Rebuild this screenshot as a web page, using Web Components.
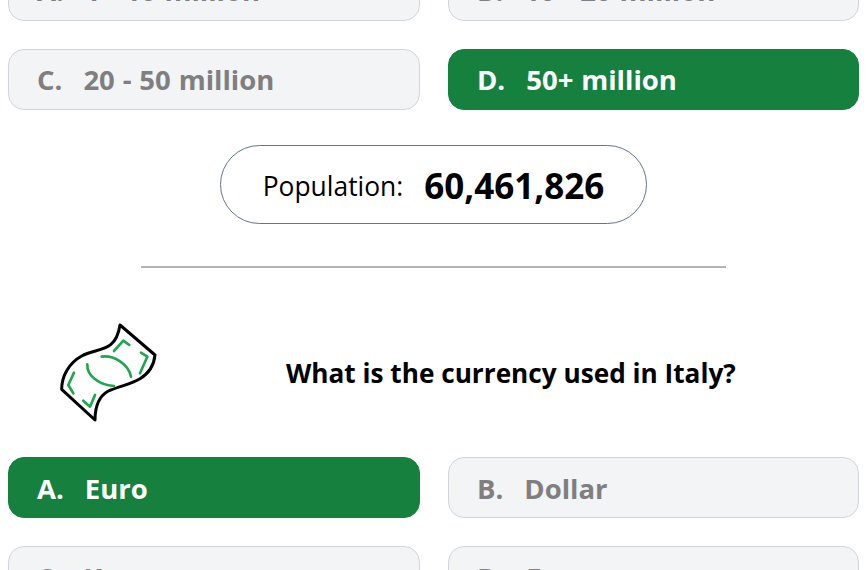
<!DOCTYPE html>
<html><head><meta charset="utf-8">
<style>
html,body{margin:0;padding:0;height:570px;overflow:hidden;background:#fff;}
body{font-family:"Open Sans","Noto Sans",sans-serif;color:#000;}
</style></head><body>
<quiz-page>
  <option-grid style="--text-nudge:0px">
    <quiz-option letter="A.">1 - 10 million</quiz-option>
    <quiz-option letter="B.">10 - 20 million</quiz-option>
    <quiz-option letter="C.">20 - 50 million</quiz-option>
    <quiz-option letter="D." selected>50+ million</quiz-option>
  </option-grid>
  <stat-pill label="Population:" value="60,461,826"></stat-pill>
  <quiz-divider></quiz-divider>
  <quiz-question>What is the currency used in Italy?</quiz-question>
  <option-grid style="--text-nudge:1px">
    <quiz-option letter="A." selected>Euro</quiz-option>
    <quiz-option letter="B.">Dollar</quiz-option>
    <quiz-option letter="C.">Krone</quiz-option>
    <quiz-option letter="D.">Franc</quiz-option>
  </option-grid>
</quiz-page>
<script>
function def(name,html,init){
  customElements.define(name,class extends HTMLElement{
    constructor(){super();this.attachShadow({mode:'open'}).innerHTML=html;}
    connectedCallback(){if(init)init(this);}
  });
}
def('quiz-page',`<style>:host{display:block;margin-top:-40px;padding:0 8px;}</style><slot></slot>`);
def('option-grid',`<style>:host{display:grid;grid-template-columns:412px 411px;column-gap:28px;row-gap:28px;}</style><slot></slot>`);
def('quiz-option',`<style>
:host{display:flex;align-items:center;box-sizing:border-box;height:61px;padding:var(--text-nudge,0px) 28px 0;border:1px solid #d1d5db;border-radius:16px;background:#f3f4f6;color:#7f7f7f;font-size:27.5px;font-weight:700;white-space:nowrap;word-spacing:.7px;}
:host([selected]){background:#16803f;border-color:#16803f;color:#fff;}
.l{margin-right:21px;}
</style><span class="l"></span><slot></slot>`,el=>{el.shadowRoot.querySelector('.l').textContent=el.getAttribute('letter');});
def('stat-pill',`<style>
:host{display:flex;align-items:center;justify-content:center;box-sizing:border-box;width:427px;height:79px;margin:35px auto 0;padding-top:2px;border:1px solid #64748b;border-radius:40px;font-size:26.4px;}
.v{font-size:35px;font-weight:700;margin-left:21px;}
</style><span class="k"></span><span class="v"></span>`,el=>{el.shadowRoot.querySelector('.k').textContent=el.getAttribute('label');el.shadowRoot.querySelector('.v').textContent=el.getAttribute('value');});
def('quiz-divider',`<style>:host{display:block;width:585px;height:2px;margin:42px 0 0 133px;background:#b4b4b4;}</style>`);
def('quiz-question',`<style>
:host{display:flex;align-items:center;height:120px;margin:42px 0 27px;font-size:26.2px;font-weight:700;}
svg{width:140px;height:120px;margin-left:32px;flex:none;}
.t{margin:6px 0 0 106px;white-space:nowrap;}
</style>
<svg viewBox="0 0 420 360" fill="none" stroke-linecap="round" stroke-linejoin="round">
<path stroke="#000" stroke-width="9" d="M240 45L345 135C342 165 330 188 300 206C270 224 232 230 205 243C178 258 165 285 165 330L65 238C65 200 85 160 125 138C155 122 190 122 212 104C230 90 236 70 240 45Z"/>
<g stroke="#1fa651" stroke-width="8">
<path d="M185 140C220 135 265 160 273 200"/>
<path d="M142 163C140 195 175 225 222 228"/>
<path d="M222 123L250 92L268 105"/>
<path d="M303 128L322 140L300 190"/>
<path d="M102 188L85 225L100 250"/>
<path d="M130 272L150 290L165 255"/>
</g></svg><span class="t"><slot></slot></span>`);
</script>
</body></html>
